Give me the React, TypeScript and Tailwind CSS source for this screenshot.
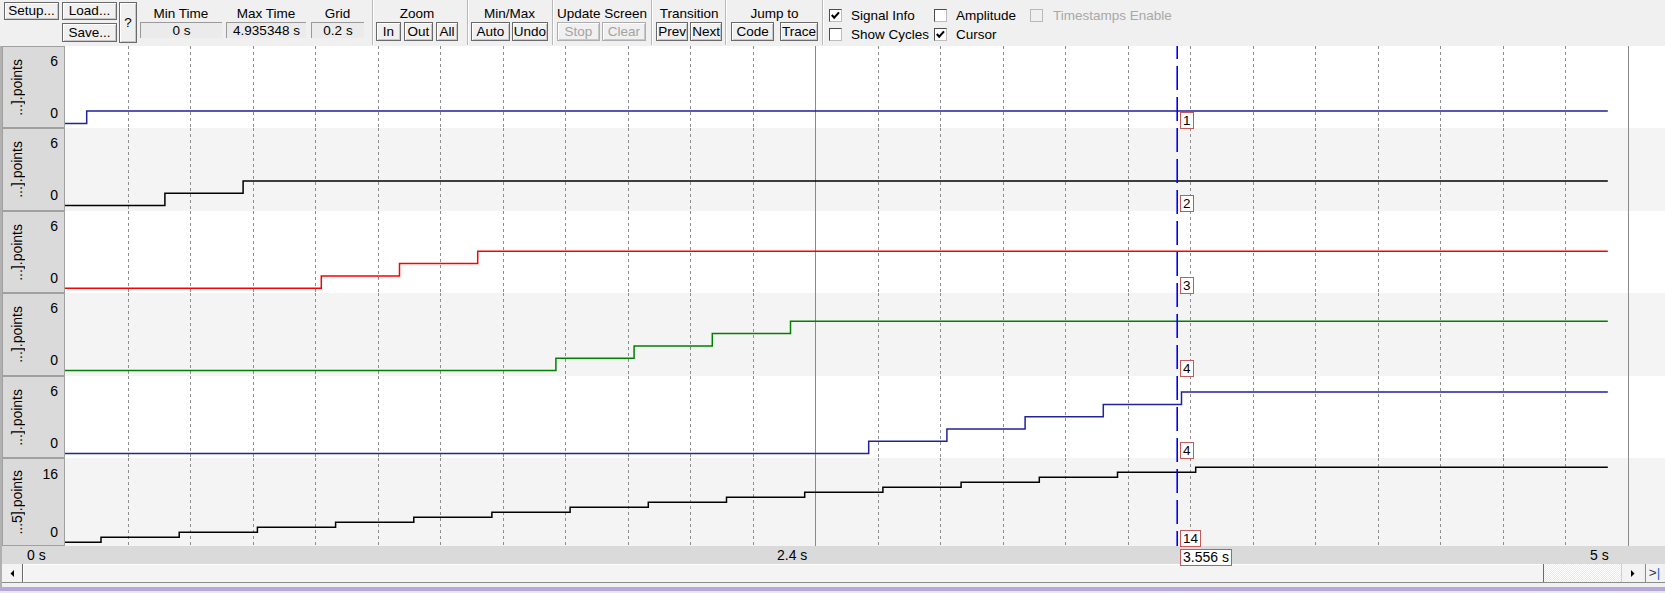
import React from "react";

const NAVY = "#22229c";
const STEP = 78.2;
const END = 1542.8;
const GRID = 62.52;

type RowDef = {
  hClass: string;
  h: number;
  base: number;
  unit: number;
  color: string;
  xs: number[];
  bg: string;
  label: string;
  top: string;
  cur: string;
  pad: string;
};

const sx = (k: number) => 21.7 + k * STEP;
const sx6 = (k: number) => 36 + k * 78.19;

const rows: RowDef[] = [
  { hClass: "h-[82px]", h: 82, base: 77.4, unit: 12.3, color: NAVY, xs: [0].map(sx), bg: "#ffffff", label: "...].points", top: "6", cur: "1", pad: "pt-[6px] pb-[5px]" },
  { hClass: "h-[83px]", h: 83, base: 77.4, unit: 12.2, color: "#000000", xs: [1, 2].map(sx), bg: "#f4f4f4", label: "...].points", top: "6", cur: "2", pad: "pt-[6px] pb-[6px]" },
  { hClass: "h-[82px]", h: 82, base: 77.2, unit: 12.3, color: "#ff0000", xs: [3, 4, 5].map(sx), bg: "#ffffff", label: "...].points", top: "6", cur: "3", pad: "pt-[6px] pb-[5px]" },
  { hClass: "h-[83px]", h: 83, base: 77.5, unit: 12.3, color: "#008000", xs: [6, 7, 8, 9].map(sx), bg: "#f4f4f4", label: "...].points", top: "6", cur: "4", pad: "pt-[6px] pb-[6px]" },
  { hClass: "h-[82px]", h: 82, base: 77.6, unit: 12.3, color: NAVY, xs: [10, 11, 12, 13, 14].map(sx), bg: "#ffffff", label: "...].points", top: "6", cur: "4", pad: "pt-[6px] pb-[5px]" },
  { hClass: "h-[88px]", h: 88, base: 84.3, unit: 5, color: "#000000", xs: Array.from({ length: 15 }, (_, k) => sx6(k)), bg: "#f4f4f4", label: "...5].points", top: "16", cur: "14", pad: "pt-[7px] pb-[4px]" },
];

const gridXs = Array.from({ length: 25 }, (_, i) => i + 1);

function pathFor(r: RowDef) {
  let d = `M0 ${r.base}`;
  r.xs.forEach((x, i) => {
    d += ` H${x.toFixed(1)} V${(r.base - (i + 1) * r.unit).toFixed(1)}`;
  });
  d += ` H${END}`;
  return d;
}

function Btn({ className = "", children, disabled = false }: { className?: string; children: React.ReactNode; disabled?: boolean }) {
  return (
    <div
      className={`flex items-center justify-center border bg-[#f0f0f0] shadow-[inset_1px_1px_0_#ffffff,inset_-1px_-1px_0_#c8c8c8] ${
        disabled ? "border-[#adadad] text-[#a3a3a3]" : "border-[#6a6a6a] text-black"
      } ${className}`}
    >
      {children}
    </div>
  );
}

function Sep({ className = "" }: { className?: string }) {
  return (
    <div className={`flex h-[45px] shrink-0 ${className}`}>
      <div className="w-px bg-[#b9b9b9]" />
      <div className="w-px bg-white" />
    </div>
  );
}

function ValueGroup({ className, label, value }: { className: string; label: string; value: string }) {
  return (
    <div className={`flex shrink-0 flex-col ${className}`}>
      <div className="flex h-[22px] items-start justify-center pt-[6px] leading-[15px]">{label}</div>
      <div className="flex h-[16px] items-center justify-center border-t border-l border-[#9a9a9a] border-r-white border-b-white bg-[#ebebeb] leading-[15px]">
        {value}
      </div>
    </div>
  );
}

function Group({ className, label, children }: { className: string; label: string; children: React.ReactNode }) {
  return (
    <div className={`flex shrink-0 flex-col ${className}`}>
      <div className="flex h-[22px] items-start justify-center whitespace-nowrap pt-[6px] leading-[15px]">{label}</div>
      <div className="flex h-[19px]">{children}</div>
    </div>
  );
}

function Check({ checked = false, disabled = false }: { checked?: boolean; disabled?: boolean }) {
  return (
    <div
      className={`flex h-[13px] w-[13px] shrink-0 items-center justify-center border ${
        disabled ? "border-[#b8b8b8] bg-[#f0f0f0]" : "border-[#4c4c4c] border-r-[#bdbdbd] border-b-[#bdbdbd] bg-white"
      }`}
    >
      {checked && (
        <svg width="11" height="11" viewBox="0 0 11 11">
          <polyline points="1.8,5 4.2,7.6 9,2.4" fill="none" stroke="#000" strokeWidth="2.1" />
        </svg>
      )}
    </div>
  );
}

function Toolbar() {
  return (
    <div className="flex h-[46px] shrink-0 bg-[#f0f0f0] text-[13.5px] leading-none text-black">
      <Btn className="ml-[4px] mt-[2px] h-[18px] w-[55px] shrink-0">Setup...</Btn>
      <div className="ml-[3px] mt-[2px] flex w-[55px] shrink-0 flex-col gap-[3px]">
        <Btn className="h-[18px]">Load...</Btn>
        <Btn className="h-[19px]">Save...</Btn>
      </div>
      <Btn className="ml-[2px] mt-[2px] h-[41px] w-[18px] shrink-0">?</Btn>
      <ValueGroup className="ml-[3px] w-[82px]" label="Min Time" value="0 s" />
      <ValueGroup className="ml-[4px] w-[80px]" label="Max Time" value="4.935348 s" />
      <ValueGroup className="ml-[5px] w-[53px]" label="Grid" value="0.2 s" />
      <Sep className="ml-[8px]" />
      <Group className="ml-[2px]" label="Zoom">
        <Btn className="w-[25px]">In</Btn>
        <Btn className="ml-[3px] w-[29px]">Out</Btn>
        <Btn className="ml-[3px] w-[22px]">All</Btn>
      </Group>
      <Sep className="ml-[9px]" />
      <Group className="ml-[2px]" label="Min/Max">
        <Btn className="w-[39px]">Auto</Btn>
        <Btn className="ml-[2px] w-[36px]">Undo</Btn>
      </Group>
      <Sep className="ml-[4px]" />
      <Group className="ml-[3px]" label="Update Screen">
        <Btn disabled className="w-[43px]">Stop</Btn>
        <Btn disabled className="ml-[2px] w-[44px]">Clear</Btn>
      </Group>
      <Sep className="ml-[4px]" />
      <Group className="ml-[3px]" label="Transition">
        <Btn className="w-[32px]">Prev</Btn>
        <Btn className="ml-[2px] w-[32px]">Next</Btn>
      </Group>
      <Sep className="ml-[3px]" />
      <Group className="ml-[4px]" label="Jump to">
        <Btn className="w-[43px]">Code</Btn>
        <Btn className="ml-[6px] w-[38px]">Trace</Btn>
      </Group>
      <Sep className="ml-[4px]" />
      <div className="ml-[5px] flex flex-col gap-[6px] pt-[9px]">
        <div className="flex h-[13px] items-center">
          <div className="flex w-[105px] items-center gap-[9px]">
            <Check checked />
            <span>Signal Info</span>
          </div>
          <div className="flex w-[96px] items-center gap-[9px]">
            <Check />
            <span>Amplitude</span>
          </div>
          <div className="flex items-center gap-[10px] text-[#a8a8a8]">
            <Check disabled />
            <span>Timestamps Enable</span>
          </div>
        </div>
        <div className="flex h-[13px] items-center">
          <div className="flex w-[105px] items-center gap-[9px]">
            <Check />
            <span className="whitespace-nowrap">Show Cycles</span>
          </div>
          <div className="flex w-[96px] items-center gap-[9px]">
            <Check checked />
            <span>Cursor</span>
          </div>
        </div>
      </div>
    </div>
  );
}

function SignalRow({ r }: { r: RowDef }) {
  return (
    <div className={`flex shrink-0 ${r.hClass}`}>
      <div className="flex w-[63px] shrink-0 border border-[#a0a0a0] bg-[#dadada] text-[14px]">
        <div className="flex w-[28px] items-center justify-center">
          <span className="rotate-180 whitespace-nowrap leading-none [writing-mode:vertical-rl]">{r.label}</span>
        </div>
        <div className={`flex flex-1 flex-col items-end justify-between pr-[6px] leading-[17px] ${r.pad}`}>
          <span>{r.top}</span>
          <span>0</span>
        </div>
      </div>
      <div className="relative flex-1">
        <svg width="1600" height={r.h} className="block">
          <rect x="0" y="0" width="1600" height={r.h} fill={r.bg} />
          {gridXs.map((k) => {
            const x = Math.round(k * GRID) + 0.5;
            const solid = k === 12 || k === 25;
            return (
              <line
                key={k}
                x1={x}
                x2={x}
                y1={0}
                y2={r.h}
                stroke={solid ? "#8a8a8a" : "#8e8e8e"}
                strokeWidth="1"
                strokeDasharray={solid ? undefined : "3 3"}
                shapeRendering="crispEdges"
              />
            );
          })}
          <path d={pathFor(r)} fill="none" stroke={r.color} strokeWidth="1.5" />
        </svg>
        <div className="absolute bottom-[-1px] left-[1115px] z-10 border border-[#c45a5a] bg-white px-[2px] text-[13.5px] leading-[15px] text-black">
          {r.cur}
        </div>
      </div>
    </div>
  );
}

export default function App() {
  return (
    <div className="flex h-[593px] w-[1665px] flex-col overflow-hidden bg-[#f0f0f0] font-['Liberation_Sans',Arial,sans-serif] text-[13.5px] text-black">
      <Toolbar />
      <div className="flex flex-col border-l-2 border-[#b0b0b0]">
        <div className="relative flex flex-col">
          {rows.map((r, i) => (
            <SignalRow key={i} r={r} />
          ))}
          <svg width="4" height="500" className="absolute left-[1173px] top-0 z-20">
            <line x1="2.2" x2="2.2" y1="0" y2="500" stroke="#0000ff" strokeWidth="1.6" strokeDasharray="24 7" strokeDashoffset="11" />
          </svg>
        </div>
        <div className="relative h-[18px] shrink-0 bg-[#dadada] text-[14px] leading-[15px]">
          <span className="absolute left-[25px] top-[2px]">0 s</span>
          <span className="absolute left-[775px] top-[2px]">2.4 s</span>
          <span className="absolute left-[1588px] top-[2px]">5 s</span>
          <div className="absolute left-[1178px] top-[3px] z-10 border border-[#c45a5a] bg-white px-[2px] leading-[15px]">3.556 s</div>
        </div>
        <div className="flex h-[19px] shrink-0 border-b border-[#8c8c8c] bg-[#f0f0f0] pr-[2px]">
          <div className="flex w-[21px] items-center justify-center border-r border-[#6a6a6a] bg-[#f3f3f3]">
            <svg width="5" height="7" viewBox="0 0 5 7">
              <polygon points="4,0 4,7 0.5,3.5" fill="#000" />
            </svg>
          </div>
          <div className="flex-1 border-r border-[#6a6a6a] bg-[#f4f4f4] shadow-[inset_1px_1px_0_#ffffff]" />
          <div className="w-[77px] bg-[repeating-conic-gradient(#e9e9e9_0%_25%,#ffffff_0%_50%)] bg-[length:2px_2px]" />
          <div className="flex w-[22px] items-center justify-center border-l border-[#d0d0d0] bg-[#f3f3f3]">
            <svg width="5" height="7" viewBox="0 0 5 7">
              <polygon points="1,0 1,7 4.5,3.5" fill="#000" />
            </svg>
          </div>
          <div className="ml-[2px] flex w-[18px] items-center justify-center border-l border-[#8c8c8c] bg-[#f3f3f3] leading-none">
            <span className="text-[#333]">&gt;</span>
            <span className="text-[#2a63d6]">|</span>
          </div>
        </div>
        <div className="h-[4px] shrink-0 bg-[#f0f0f0]" />
      </div>
      <div className="h-[4px] shrink-0 bg-[#b6a8dc]" />
      <div className="h-[2px] shrink-0 bg-[#ebe7f4]" />
    </div>
  );
}
